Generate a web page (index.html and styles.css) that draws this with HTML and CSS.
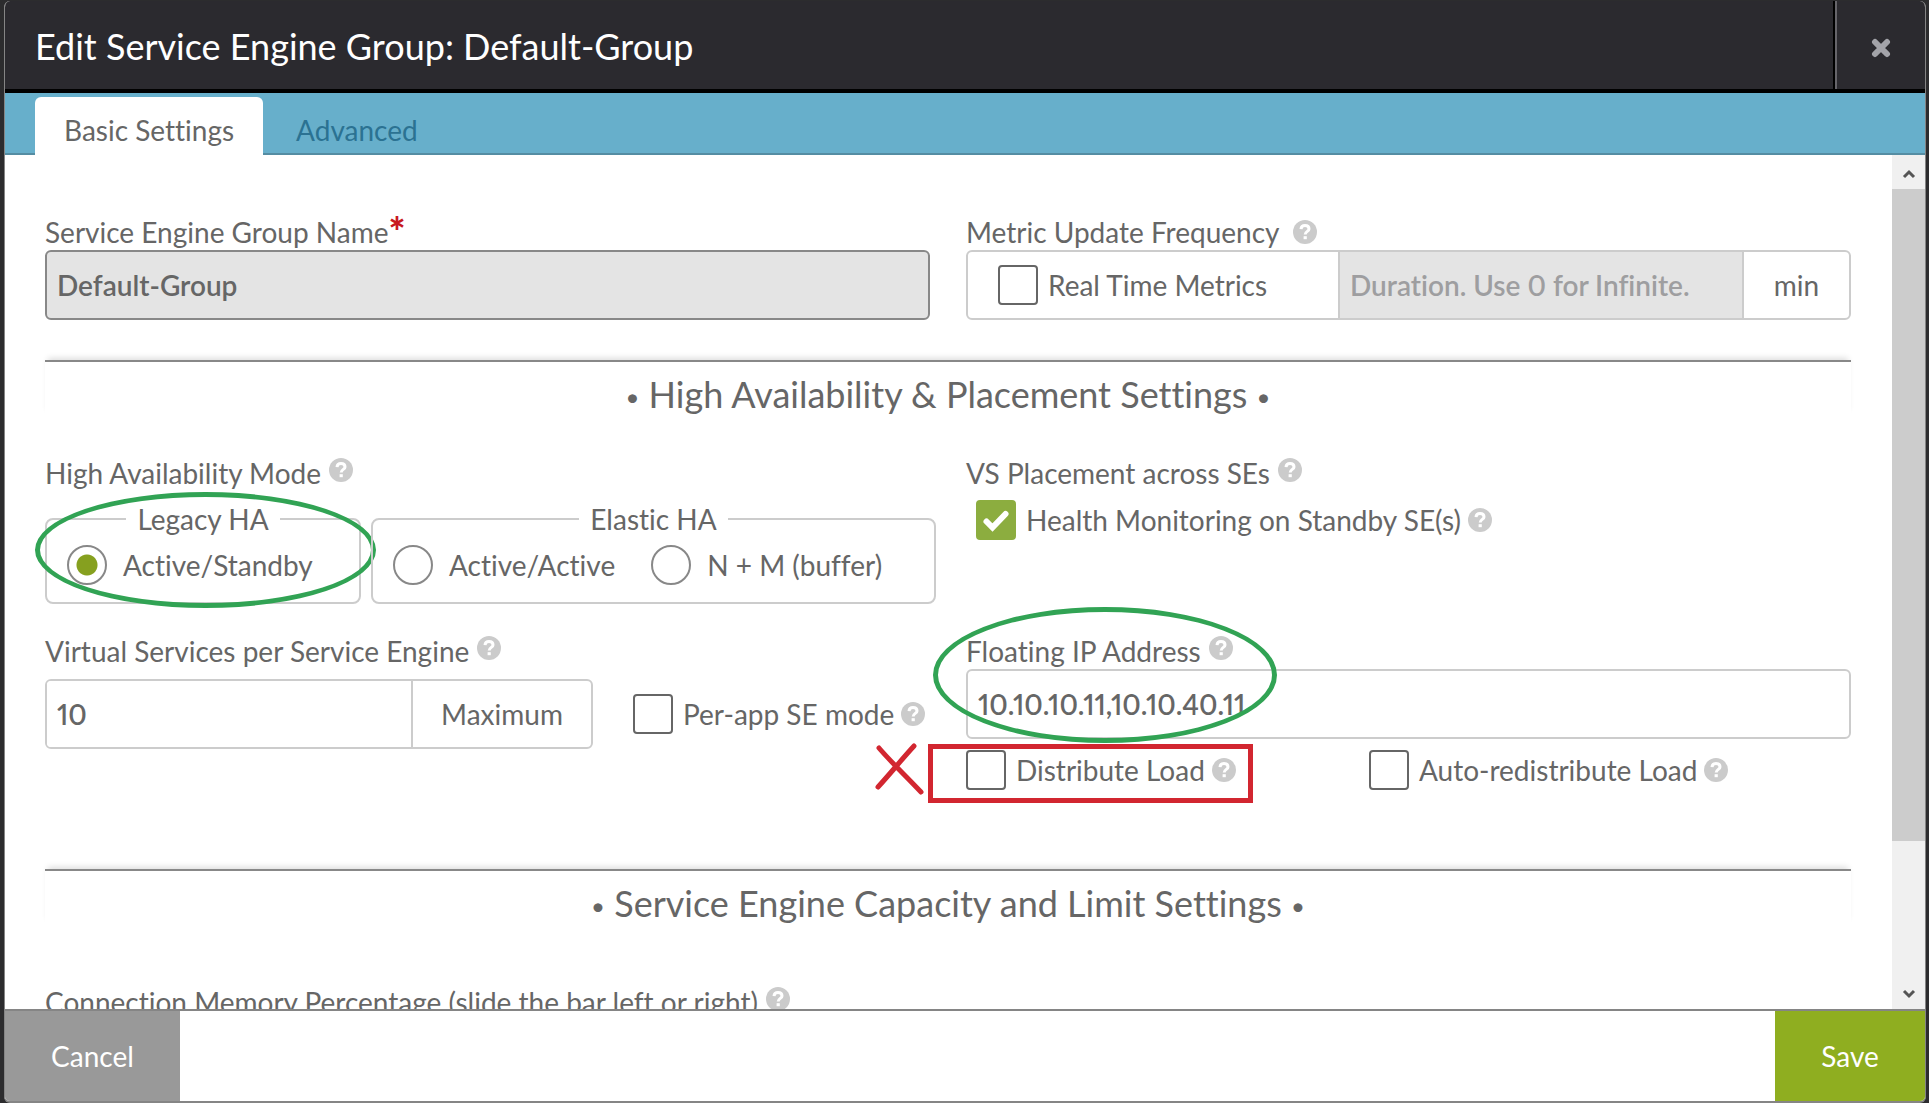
FILE: index.html
```html
<!DOCTYPE html>
<html lang="en">
<head>
<meta charset="utf-8">
<title>Edit Service Engine Group</title>
<link rel="stylesheet" href="styles.css">
</head>
<body>
<svg class="defs" aria-hidden="true">
  <symbol id="help" viewBox="0 0 24 24">
    <circle cx="12" cy="12" r="12" fill="#cbcbcb"/>
    <path d="M8 9.2C8.200 6.600 9.900 5.600 12 5.600C14.300 5.600 16 6.900 16 8.900C16 11.500 12.200 11.300 12.200 14.600" fill="none" stroke="#fff" stroke-width="3"/>
    <rect x="10.600" y="16.200" width="3.200" height="3" fill="#fff"/>
  </symbol>
</svg>
<div class="modal">
  <header class="modal-header">
    <h1 class="modal-title">Edit Service Engine Group: Default-Group</h1>
    <button class="close" type="button" aria-label="Close">
      <svg width="20" height="20" viewBox="0 0 20 20"><path d="M4 4L16 16M16 4L4 16" stroke="#a3a3a9" stroke-width="6" stroke-linecap="round"/></svg>
    </button>
  </header>
  <nav class="tabs">
    <a class="tab tab-active" href="#basic">Basic Settings</a>
    <a class="tab" href="#advanced">Advanced</a>
  </nav>
  <div class="body">
    <form class="content" id="group-form">
      <div class="columns">
        <div class="field">
          <div class="label-row"><label for="name">Service Engine Group Name</label><span class="required">*</span></div>
          <input class="text-input read-only" id="name" type="text" value="Default-Group" readonly>
        </div>
        <div class="field">
          <div class="label-row label-wide"><span>Metric Update Frequency</span><svg class="help help-mid"><use href="#help"/></svg></div>
          <div class="group">
            <label class="group-check check"><input type="checkbox">Real Time Metrics</label>
            <input class="group-input duration" type="text" placeholder="Duration. Use 0 for Infinite." aria-label="Duration" disabled>
            <span class="group-unit">min</span>
          </div>
        </div>
      </div>

      <h2 class="section"><span class="dot">•</span> High Availability &amp; Placement Settings <span class="dot">•</span></h2>

      <div class="columns">
        <div class="field">
          <div class="label-row"><span>High Availability Mode</span><svg class="help"><use href="#help"/></svg></div>
          <div class="modes">
            <fieldset class="mode">
              <legend>Legacy HA</legend>
              <div class="radios"><label class="radio"><input type="radio" name="ha" checked>Active/Standby</label></div>
              <span class="mark-oval mark-legacy"></span>
            </fieldset>
            <fieldset class="mode">
              <legend>Elastic HA</legend>
              <div class="radios">
                <label class="radio"><input type="radio" name="ha">Active/Active</label>
                <label class="radio"><input type="radio" name="ha">N + M (buffer)</label>
              </div>
            </fieldset>
          </div>
        </div>
        <div class="field">
          <div class="label-row"><span>VS Placement across SEs</span><svg class="help"><use href="#help"/></svg></div>
          <div class="check-row check-indent">
            <label class="check"><input type="checkbox" checked>Health Monitoring on Standby SE(s)</label><svg class="help help-mid"><use href="#help"/></svg>
          </div>
        </div>
      </div>

      <div class="columns columns-next">
        <div class="field">
          <div class="label-row"><label for="max">Virtual Services per Service Engine</label><svg class="help"><use href="#help"/></svg></div>
          <div class="limit-row">
            <div class="group limit">
              <input class="group-input" id="max" type="text" value="10">
              <span class="group-unit group-unit-wide">Maximum</span>
            </div>
            <div class="check-row">
              <label class="check"><input type="checkbox">Per-app SE mode</label><svg class="help help-mid"><use href="#help"/></svg>
            </div>
          </div>
        </div>
        <div class="field">
          <div class="label-row"><label for="ip">Floating IP Address</label><svg class="help"><use href="#help"/></svg></div>
          <input class="text-input" id="ip" type="text" value="10.10.10.11,10.10.40.11">
          <span class="mark-oval mark-ip"></span>
          <div class="loads">
            <div class="check-row load">
              <label class="check"><input type="checkbox">Distribute Load</label><svg class="help help-mid"><use href="#help"/></svg>
              <span class="mark-box"></span>
              <svg class="mark-cross" viewBox="0 0 50 52"><path d="M4 5C15 18 30 32 46 49M39 3C27 16 15 31 3 44" fill="none" stroke="#d22630" stroke-width="5" stroke-linecap="round"/></svg>
            </div>
            <div class="check-row load">
              <label class="check"><input type="checkbox">Auto-redistribute Load</label><svg class="help help-mid"><use href="#help"/></svg>
            </div>
          </div>
        </div>
      </div>

      <h2 class="section section-capacity"><span class="dot">•</span> Service Engine Capacity and Limit Settings <span class="dot">•</span></h2>

      <div class="label-row"><span>Connection Memory Percentage (slide the bar left or right)</span><svg class="help"><use href="#help"/></svg></div>
    </form>
    <div class="scrollbar" aria-hidden="true">
      <svg class="arrow" viewBox="0 0 14 10"><path d="M2 8L7 3L12 8" fill="none" stroke="#555" stroke-width="3"/></svg>
      <div class="track"><div class="thumb"></div></div>
      <svg class="arrow" viewBox="0 0 14 10"><path d="M2 2L7 7L12 2" fill="none" stroke="#555" stroke-width="3"/></svg>
    </div>
  </div>
  <footer class="footer">
    <button class="button cancel" type="button">Cancel</button>
    <button class="button save" type="submit" form="group-form">Save</button>
  </footer>
</div>
</body>
</html>
```
FILE: styles.css
```css
* { box-sizing: border-box; }

body {
  margin: 0;
  padding: 1px 3px 0 4px;
  height: 100vh;
  background: #2c2c2e;
  color: #666;
  font: 28px/32px Lato, "Liberation Sans", sans-serif;
  font-variant-ligatures: none;
  font-variant-numeric: proportional-nums;
}

input, button { font: inherit; color: inherit; margin: 0; }

.defs { position: absolute; width: 0; height: 0; }

.modal {
  display: flex;
  flex-direction: column;
  height: 100%;
  border: solid #858585;
  border-width: 0 1px 2px;
  border-radius: 6px;
  background: #fff;
  overflow: hidden;
}

/* Title bar */
.modal-header {
  display: flex;
  flex: none;
  height: 92px;
  background: #2b2a2f;
  border-bottom: 4px solid #000;
}
.modal-title {
  flex: 1;
  margin: 0;
  padding: 23px 30px;
  color: #fff;
  font-size: 36px;
  line-height: 44px;
  font-weight: 400;
}
.close {
  display: grid;
  place-items: center;
  width: 90px;
  padding: 6px 0 0;
  border: 0;
  border-left: 2px solid #66656a;
  outline: 2px solid #000;
  background: none;
}

/* Tabs */
.tabs {
  display: flex;
  flex: none;
  gap: 4px;
  height: 62px;
  padding: 4px 30px 0;
  background: #67afcb;
  box-shadow: inset 0 -2px #558da3;
}
.tab {
  padding: 17px 29px 0;
  color: #2b7292;
  text-decoration: none;
}
.tab-active {
  background: #fff;
  border-radius: 6px 6px 0 0;
  color: #666;
}

/* Scrolling body */
.body { display: flex; flex: 1; min-height: 0; }
.content {
  flex: 1;
  min-width: 0;
  padding: 61px 41px 0 40px;
  overflow-y: auto;
  scrollbar-width: none;
}
.columns {
  display: grid;
  grid-template-columns: 1fr 1fr;
  gap: 36px;
  align-items: start;
}
.columns-next { margin-top: 31px; }
.field { position: relative; min-width: 0; }

.label-row { display: flex; gap: 8px; height: 34px; white-space: nowrap; }
.label-wide { gap: 14px; }
.required { color: #c8191e; font-size: 40px; font-weight: 900; margin-left: -8px; }
.help { flex: none; width: 24px; height: 24px; margin-top: 1px; }
.help-mid { margin-top: 4px; }

.text-input {
  display: block;
  width: 100%;
  height: 70px;
  padding: 0 10px;
  border: 2px solid #ccc;
  border-radius: 6px;
  background: #fff;
  font-weight: 600;
}
.read-only { border-color: #888; background: #e4e4e4; }

.group {
  display: flex;
  height: 70px;
  border: 2px solid #ccc;
  border-radius: 6px;
  overflow: hidden;
}
.group-check { width: 370px; padding-left: 30px; }
.group-input {
  flex: 1;
  min-width: 0;
  padding: 0 10px;
  border: 0;
  font-weight: 600;
}
.duration { background: #e4e4e4; border-left: 2px solid #ccc; }
.duration::placeholder { color: #9e9ea0; }
.group-unit {
  width: 107px;
  border-left: 2px solid #ccc;
  line-height: 66px;
  text-align: center;
}
.group-unit-wide { width: 180px; }

/* Tick boxes and radios */
.check, .radio { display: flex; align-items: center; white-space: nowrap; }
.check { gap: 10px; }
.radio { gap: 16px; }
.check input, .radio input {
  appearance: none;
  flex: none;
  width: 40px;
  height: 40px;
  border: 2px solid #666;
  border-radius: 4px;
  background: #fff;
}
.radio input { border-color: #888; border-radius: 50%; }
.radio input:checked { background: radial-gradient(circle, #86a01f 10px, #fff 11px); }
.check input:checked {
  border-color: #8cad3f;
  background: #8cad3f url("data:image/svg+xml,%3Csvg xmlns='http://www.w3.org/2000/svg' viewBox='0 0 36 36'%3E%3Cpath d='M8.500 19.500L14.500 25.500L27.500 12' fill='none' stroke='white' stroke-width='6' stroke-linecap='round'/%3E%3C/svg%3E");
}
.check-row { position: relative; display: flex; align-items: center; gap: 7px; }
.check-row .help { margin: 0; }
.check-indent { margin: 9px 0 0 10px; }

/* Section titles */
.section {
  margin: 40px 0 39px;
  padding-top: 8px;
  border-top: 2px solid #888;
  box-shadow: 0 -5px 6px -3px #ddd;
  font-size: 36px;
  line-height: 48px;
  font-weight: 400;
  text-align: center;
}
.section-capacity { margin: 79px 0 59px; }
.dot { font-size: 24px; line-height: 24px; vertical-align: 2px; }

.modes {
  display: grid;
  grid-template-columns: 316fr 565fr;
  gap: 10px;
  margin: 12px -6px 0 0;
}
.mode {
  position: relative;
  min-width: 0;
  margin: 0;
  padding: 10px 20px 17px;
  border: 2px solid #ccc;
  border-radius: 8px;
}
.mode legend { margin: 0 auto; padding: 0 11px; }
.radios { display: flex; gap: 36px; }

.limit-row { display: flex; align-items: center; gap: 40px; margin-top: 10px; }
.limit { width: 548px; }
.loads { display: flex; margin-top: 11px; }
.load { width: 403px; }

/* Review marks drawn over the form */
.mark-oval { position: absolute; border: 5px solid #31a354; border-radius: 50%; pointer-events: none; }
.mark-legacy { left: -12px; top: -43px; width: 341px; height: 116px; }
.mark-ip { left: -33px; top: -28px; width: 344px; height: 136px; }
.mark-box { position: absolute; left: -38px; top: -6px; width: 325px; height: 59px; border: 5px solid #d22630; }
.mark-cross { position: absolute; left: -91px; top: -7px; width: 50px; height: 52px; }

/* Scroll bar */
.scrollbar { display: flex; flex-direction: column; flex: none; width: 33px; background: #f0f0f0; }
.arrow { flex: none; width: 14px; height: 10px; margin: 14px auto 10px; }
.track { flex: 1; }
.thumb { height: 83%; background: #ccc; }

/* Footer */
.footer {
  display: flex;
  flex: none;
  justify-content: space-between;
  height: 92px;
  border-top: 2px solid #858585;
}
.button { border: 0; padding: 0; color: #fff; }
.cancel { width: 175px; background: #999; }
.save { width: 150px; background: #8fae20; }
```
